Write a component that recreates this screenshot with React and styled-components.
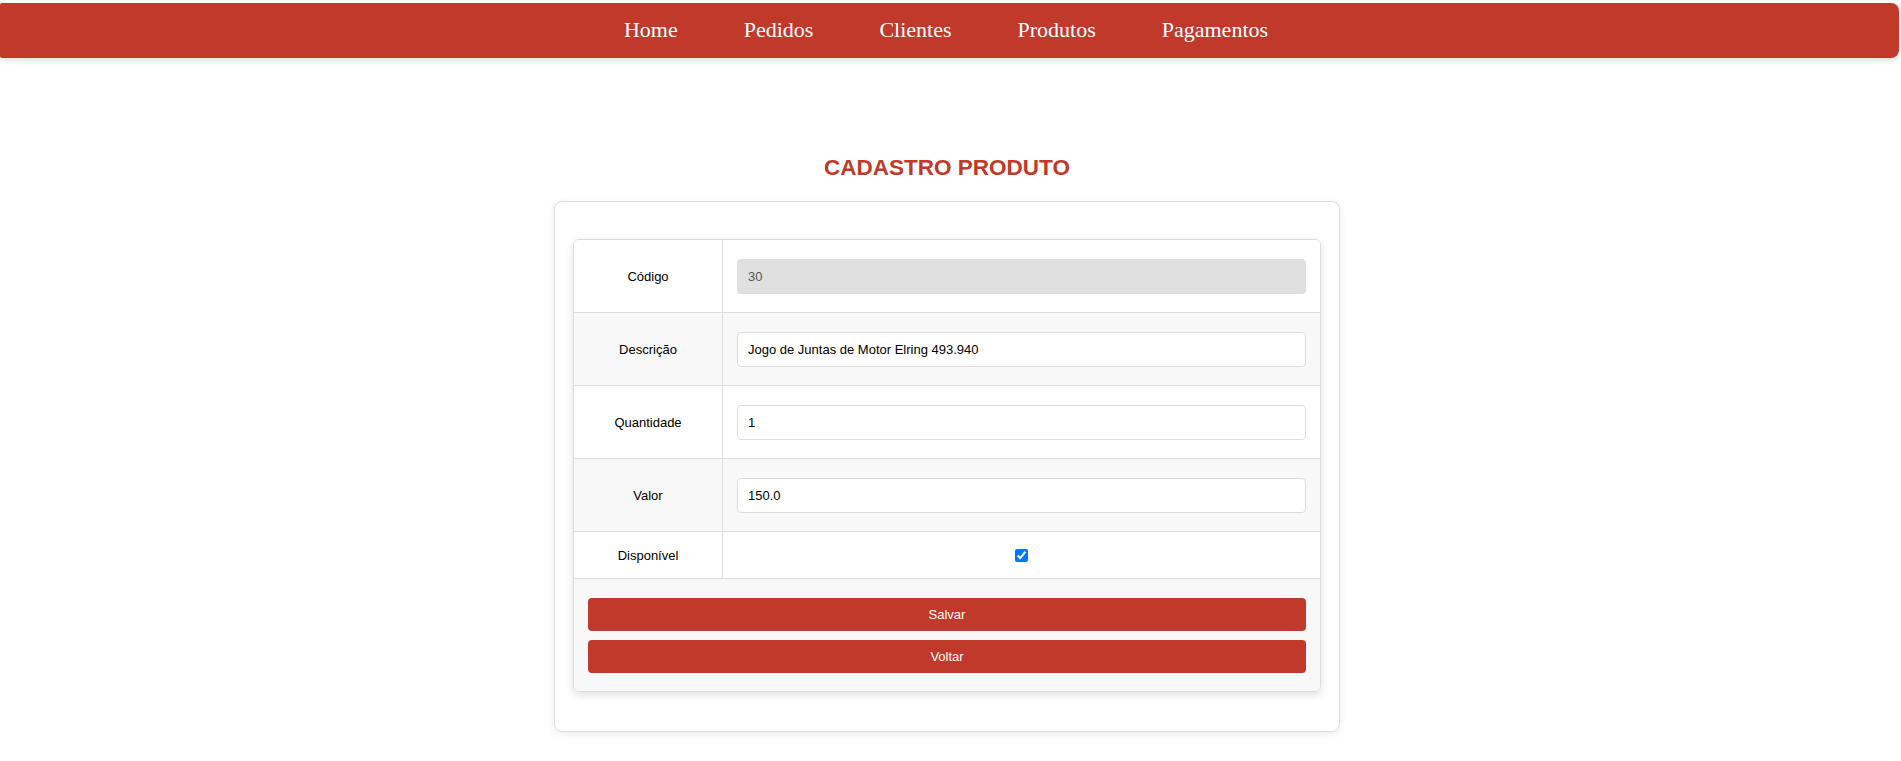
import React from "react";
import styled, { createGlobalStyle } from "styled-components";

const GlobalStyle = createGlobalStyle`
  body {
    margin: 0;
    background: #ffffff;
    font-family: "Liberation Sans", Arial, sans-serif;
  }
`;

const NavBar = styled.nav`
  margin: 3px 2px 0 0;
  background: #c0392b;
  border-radius: 2px 8px 8px 2px;
  box-shadow: 0 2px 6px rgba(0, 0, 0, 0.15);
  padding: 14px 7px 15px 0;
  display: flex;
  justify-content: center;
  gap: 66px;
`;

const NavLink = styled.a`
  font-family: "Liberation Serif", "Times New Roman", serif;
  font-size: 22px;
  color: #ffffff;
  text-decoration: none;
  cursor: pointer;
`;

const Main = styled.main`
  padding: 96px 7px 30px 0;
  display: flex;
  flex-direction: column;
  align-items: center;
`;

const Title = styled.h1`
  margin: 0 0 19px;
  font-size: 22.5px;
  line-height: 28px;
  font-weight: 700;
  color: #c0392b;
`;

const Card = styled.div`
  width: 786px;
  box-sizing: border-box;
  padding: 37px 18px 39px;
  border: 1px solid #dddddd;
  border-radius: 8px;
  background: #ffffff;
  box-shadow: 0 2px 8px rgba(0, 0, 0, 0.08);
`;

const Table = styled.div`
  border: 1px solid #dddddd;
  border-radius: 6px;
  overflow: hidden;
  box-shadow: 0 3px 8px rgba(0, 0, 0, 0.12);
`;

const Row = styled.div`
  display: grid;
  grid-template-columns: 149px 1fr;
  background: ${(p) => (p.$shaded ? "#f8f8f8" : "#ffffff")};
  border-bottom: 1px solid #dddddd;
  &:last-child {
    border-bottom: none;
  }
`;

const Label = styled.div`
  display: flex;
  align-items: center;
  justify-content: center;
  border-right: 1px solid #dddddd;
  font-size: 13px;
  color: #000000;
  padding: 15px 0;
`;

const Field = styled.div`
  padding: ${(p) => (p.$center ? "15px 14px" : "19px 14px 18px")};
  display: flex;
  align-items: center;
  justify-content: ${(p) => (p.$center ? "center" : "stretch")};
  min-height: 16px;
`;

const Input = styled.input`
  width: 100%;
  height: 35px;
  box-sizing: border-box;
  padding: 0 10px;
  border: 1px solid #dddddd;
  border-radius: 4px;
  font-family: "Liberation Sans", Arial, sans-serif;
  font-size: 13px;
  color: #000000;
  background: #ffffff;
  outline: none;
  &:disabled {
    background: #e0e0e0;
    color: #555555;
  }
`;

const Check = styled.input`
  margin: 0;
  width: 13px;
  height: 13px;
`;

const ButtonCell = styled.div`
  grid-column: 1 / -1;
  padding: 19px 14px 18px;
  display: flex;
  flex-direction: column;
  gap: 9px;
`;

const Button = styled.button`
  height: 33px;
  border: none;
  border-radius: 4px;
  background: #c0392b;
  color: #ffffff;
  font-family: "Liberation Sans", Arial, sans-serif;
  font-size: 13px;
  cursor: pointer;
`;

const links = ["Home", "Pedidos", "Clientes", "Produtos", "Pagamentos"];

const fields = [
  { label: "Código", value: "30", disabled: true },
  { label: "Descrição", value: "Jogo de Juntas de Motor Elring 493.940" },
  { label: "Quantidade", value: "1" },
  { label: "Valor", value: "150.0" },
];

export default function App() {
  return (
    <>
      <GlobalStyle />
      <NavBar>
        {links.map((l) => (
          <NavLink key={l}>{l}</NavLink>
        ))}
      </NavBar>
      <Main>
        <Title>CADASTRO PRODUTO</Title>
        <Card>
          <Table>
            {fields.map((f, i) => (
              <Row key={f.label} $shaded={i % 2 === 1}>
                <Label>{f.label}</Label>
                <Field>
                  <Input defaultValue={f.value} disabled={f.disabled} />
                </Field>
              </Row>
            ))}
            <Row>
              <Label>Disponível</Label>
              <Field $center>
                <Check type="checkbox" defaultChecked />
              </Field>
            </Row>
            <Row $shaded>
              <ButtonCell>
                <Button>Salvar</Button>
                <Button>Voltar</Button>
              </ButtonCell>
            </Row>
          </Table>
        </Card>
      </Main>
    </>
  );
}
